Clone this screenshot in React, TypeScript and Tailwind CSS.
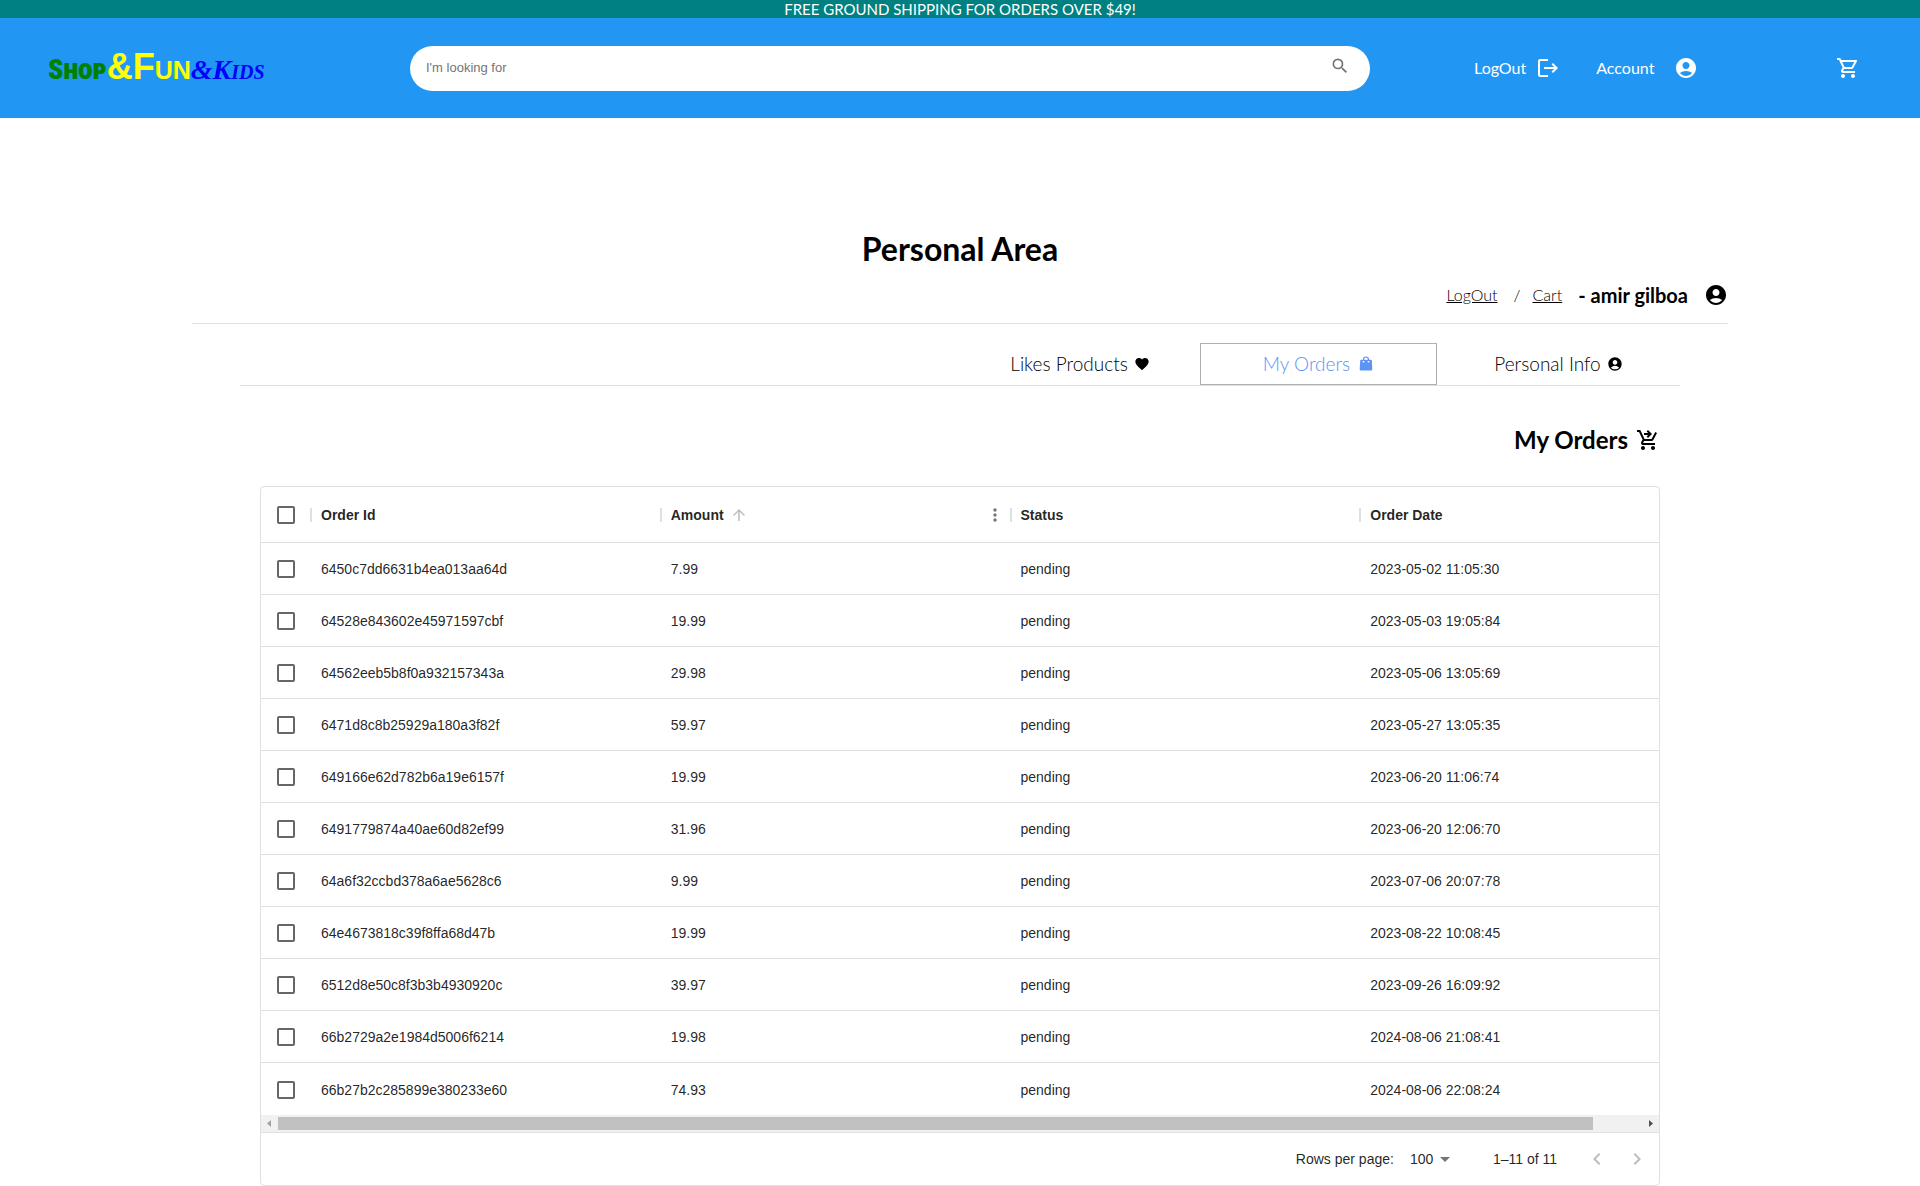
import { useState } from "react";
import {
  MdAccountCircle, MdArrowDropDown, MdArrowUpward, MdChevronLeft, MdChevronRight, MdFavorite,
  MdLogout, MdMoreVert, MdOutlineShoppingCart, MdSearch, MdShoppingCartCheckout,
} from "react-icons/md";

const orders = [
  ["6450c7dd6631b4ea013aa64d", "7.99", "2023-05-02 11:05:30"],
  ["64528e843602e45971597cbf", "19.99", "2023-05-03 19:05:84"],
  ["64562eeb5b8f0a932157343a", "29.98", "2023-05-06 13:05:69"],
  ["6471d8c8b25929a180a3f82f", "59.97", "2023-05-27 13:05:35"],
  ["649166e62d782b6a19e6157f", "19.99", "2023-06-20 11:06:74"],
  ["6491779874a40ae60d82ef99", "31.96", "2023-06-20 12:06:70"],
  ["64a6f32ccbd378a6ae5628c6", "9.99", "2023-07-06 20:07:78"],
  ["64e4673818c39f8ffa68d47b", "19.99", "2023-08-22 10:08:45"],
  ["6512d8e50c8f3b3b4930920c", "39.97", "2023-09-26 16:09:92"],
  ["66b2729a2e1984d5006f6214", "19.98", "2024-08-06 21:08:41"],
  ["66b27b2c285899e380233e60", "74.93", "2024-08-06 22:08:24"],
];

function Check({ label, checked, onChange }: { label: string; checked: boolean; onChange: () => void }) {
  return (
    <input
      type="checkbox"
      aria-label={label}
      checked={checked}
      onChange={onChange}
      className="ml-4 block size-[18px] appearance-none rounded-[2px] border-2 border-[#666] checked:bg-[#1976d2]"
    />
  );
}

function Separator() {
  return <span className="h-[14px] w-[2px] shrink-0 bg-[#e0e0e0]" />;
}

function BagIcon() {
  return (
    <svg viewBox="0 0 16 16" className="size-4">
      <path d="M5.500 5V3.500a2.500 2.500 0 0 1 5 0V5" fill="none" stroke="currentColor" strokeWidth="1.200" />
      <path
        d="M3 3.800h10a.8.8 0 0 1 .8.700l.5 8.800a1.200 1.200 0 0 1-1.200 1.200H2.900a1.200 1.200 0 0 1-1.200-1.200l.5-8.800a.8.8 0 0 1 .8-.700zM5.500 4.800a.9.9 0 1 0 0 1.800.9.9 0 0 0 0-1.800zm5 0a.9.9 0 1 0 0 1.800.9.9 0 0 0 0-1.800z"
        fill="currentColor"
        fillRule="evenodd"
      />
    </svg>
  );
}

function Header() {
  return (
    <header>
      <p className="h-[18px] bg-[#008080] text-center text-[15px] leading-[19px] text-white">
        FREE GROUND SHIPPING FOR ORDERS OVER $49!
      </p>
      <div className="flex h-[100px] items-center bg-[#2196f3] text-white">
        <a href="#" className="flex w-[410px] shrink-0 items-baseline pl-12 font-bold leading-10 [font-variant:small-caps]">
          <span className="font-['Impact','Roboto_Condensed','Open_Sans_Condensed','Roboto',sans-serif] text-[28px] font-black text-[#008000]">Shop</span>
          <span className="font-['Liberation_Sans',sans-serif] text-[36px] text-[#ffff00]">&amp;Fun</span>
          <span className="font-['Liberation_Serif',serif] text-[28px] italic text-[#0000ff]">&amp;Kids</span>
        </a>
        <form className="flex h-[45px] w-1/2 items-center rounded-full bg-white pl-4 pr-5" onSubmit={(e) => e.preventDefault()}>
          <input
            aria-label="Search"
            placeholder="I'm looking for"
            className="min-w-0 flex-1 font-['Liberation_Sans',sans-serif] text-[13px] text-black outline-none placeholder:text-[#757575]"
          />
          <button aria-label="Search" className="pb-1 text-[#757575]"><MdSearch size={20} /></button>
        </form>
        <nav className="flex flex-1 items-center pl-[104px] pr-[60px] text-base">
          <button className="flex items-center gap-2.5">LogOut <MdLogout size={24} /></button>
          <button className="ml-9 flex items-center gap-5">Account <MdAccountCircle size={24} /></button>
          <button aria-label="Cart" className="ml-auto"><MdOutlineShoppingCart size={24} /></button>
        </nav>
      </div>
    </header>
  );
}

export default function App() {
  const [picked, setPicked] = useState<string[]>([]);
  const toggle = (id: string) => setPicked((p) => (p.includes(id) ? p.filter((x) => x !== id) : [...p, id]));
  const all = picked.length === orders.length;

  return (
    <div className="bg-white font-['Lato',sans-serif] text-black">
      <Header />
      <main className="mx-auto w-4/5 pt-[106px]">
        <h1 className="text-center text-[32px] font-bold leading-[50px]">Personal Area</h1>
        <div className="flex h-[50px] items-start justify-end border-b border-[#e0e0e0] pt-[9px] text-base font-light leading-6">
          <a href="#" className="underline">LogOut</a>
          <span className="ml-4 mr-3">/</span>
          <a href="#" className="underline">Cart</a>
          <b className="mx-4 text-xl font-bold leading-6">- amir gilboa</b>
          <MdAccountCircle size={24} />
        </div>
        <div className="px-12">
          <div className="mt-[19px] flex justify-end border-b border-[#e0e0e0] text-[19px] font-light">
            <button className="flex h-[42px] w-60 items-center justify-center gap-1.5">Likes Products <MdFavorite size={16} /></button>
            <button className="flex h-[42px] w-[237px] items-center justify-center gap-2 border border-[#b0b0b0] text-[#5c93f5]">My Orders <BagIcon /></button>
            <button className="flex h-[42px] w-[243px] items-center justify-center gap-1.5">Personal Info <MdAccountCircle size={16} /></button>
          </div>
          <section className="px-5 font-['Liberation_Sans',sans-serif] text-sm text-[rgba(0,0,0,0.87)]">
            <h2 className="flex h-[100px] items-center justify-end gap-2 pt-2 font-['Lato',sans-serif] text-2xl font-bold text-black">
              My Orders <MdShoppingCartCheckout size={24} />
            </h2>
            <div className="rounded border border-[#e0e0e0]">
              <div className="overflow-hidden">
                <table className="w-[calc(100%+52px)] table-fixed border-separate border-spacing-0 text-left">
                  <thead>
                    <tr className="h-14 *:border-b *:border-[#e0e0e0]">
                      <th className="w-[51px]">
                        <div className="flex items-center justify-between">
                          <Check label="Select all rows" checked={all} onChange={() => setPicked(all ? [] : orders.map((o) => o[0]))} />
                          <Separator />
                        </div>
                      </th>
                      <th className="pl-[9px]"><div className="flex items-center justify-between">Order Id<Separator /></div></th>
                      <th className="pl-[9px]">
                        <div className="flex items-center">
                          Amount <MdArrowUpward size={18} className="ml-[6px] text-[#bdbdbd]" />
                          <button aria-label="Amount column menu" className="ml-auto mr-[5px] text-[#757575]"><MdMoreVert size={20} /></button>
                          <Separator />
                        </div>
                      </th>
                      <th className="pl-[9px]"><div className="flex items-center justify-between">Status<Separator /></div></th>
                      <th className="pl-[9px]">Order Date</th>
                    </tr>
                  </thead>
                  <tbody>
                    {orders.map(([id, amount, date], i) => (
                      <tr key={id} className="h-[52px] *:border-b *:border-[#e0e0e0] *:pt-px last:*:border-b-0">
                        <td><Check label={`Select row ${i + 1}`} checked={picked.includes(id)} onChange={() => toggle(id)} /></td>
                        <td className="pl-[9px]">{id}</td>
                        <td className="pl-[9px]">{amount}</td>
                        <td className="pl-[9px]">pending</td>
                        <td className="pl-[9px]">{date}</td>
                      </tr>
                    ))}
                  </tbody>
                </table>
              </div>
              <div className="flex h-[17px] items-center bg-[#f1f1f1]">
                <svg viewBox="0 0 17 17" className="size-[17px] fill-[#a3a3a3]"><path d="M10 5v7L6 8.500z" /></svg>
                <div className="flex-1"><div className="h-[13px] w-[96.400%] bg-[#c1c1c1]" /></div>
                <svg viewBox="0 0 17 17" className="size-[17px] fill-[#505050]"><path d="M7 5v7l4-3.500z" /></svg>
              </div>
              <div className="flex h-[53px] items-center justify-end border-t border-[#e0e0e0] pr-[10px]">
                <label htmlFor="rows">Rows per page:</label>
                <div className="ml-4 flex items-center">
                  <select id="rows" defaultValue="100" className="appearance-none"><option>100</option><option>50</option></select>
                  <MdArrowDropDown size={24} className="-ml-px text-[#757575]" />
                </div>
                <span className="ml-9">1–11 of 11</span>
                <button aria-label="Previous page" className="ml-7 text-[#bdbdbd]"><MdChevronLeft size={24} /></button>
                <button aria-label="Next page" className="ml-4 text-[#bdbdbd]"><MdChevronRight size={24} /></button>
              </div>
            </div>
          </section>
        </div>
      </main>
    </div>
  );
}
